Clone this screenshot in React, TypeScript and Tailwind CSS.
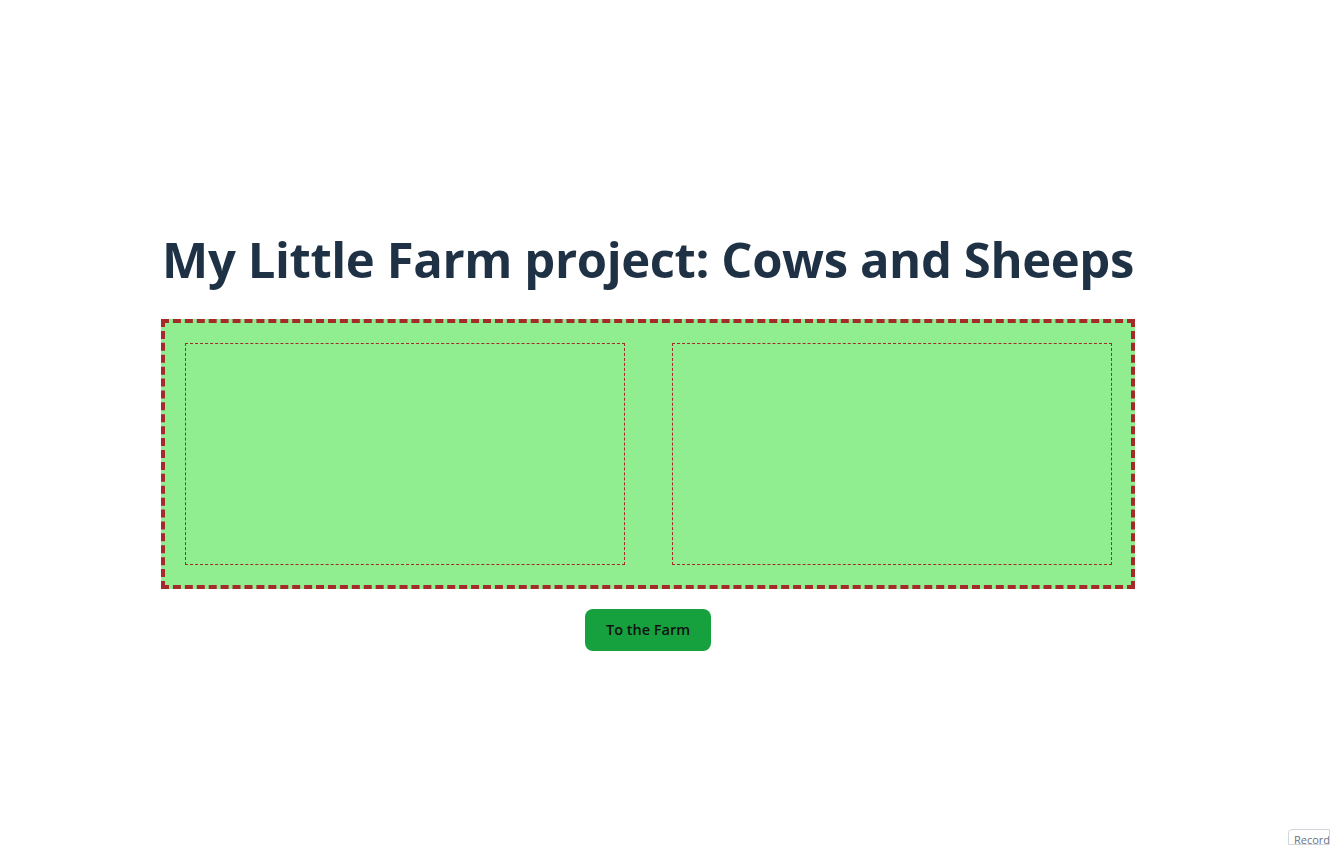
export default function App() {
  return (
    <div className="relative min-h-[845px] w-full bg-white font-['Open_Sans',sans-serif]">
      <div className="flex w-[1296px] flex-col items-center pt-[221px]">
        <h1 className="text-[49px] font-bold leading-[76px] tracking-[-0.4px] text-[#1f3144]">
          My Little Farm project: Cows and Sheeps
        </h1>
        <div className="mt-[22px] flex w-[974px] justify-between border-4 border-dashed border-[#a52a2a] bg-[#90ee90] py-5 pl-5 pr-[19px]">
          <div className="h-[222px] w-[440px] border border-dashed border-[#a52a2a]"></div>
          <div className="h-[222px] w-[440px] border border-dashed border-[#a52a2a]"></div>
        </div>
        <button className="mt-5 h-[42px] w-[126px] rounded-lg bg-[#16a13e] text-[14.5px] font-semibold text-[#111]">
          To the Farm
        </button>
      </div>
      <div className="fixed bottom-0 right-0 h-[16px] w-[42px] overflow-hidden rounded-tl-sm border border-gray-300 bg-white pl-[5px] text-[11px] leading-[20px] text-gray-500">
        Record
      </div>
    </div>
  );
}
